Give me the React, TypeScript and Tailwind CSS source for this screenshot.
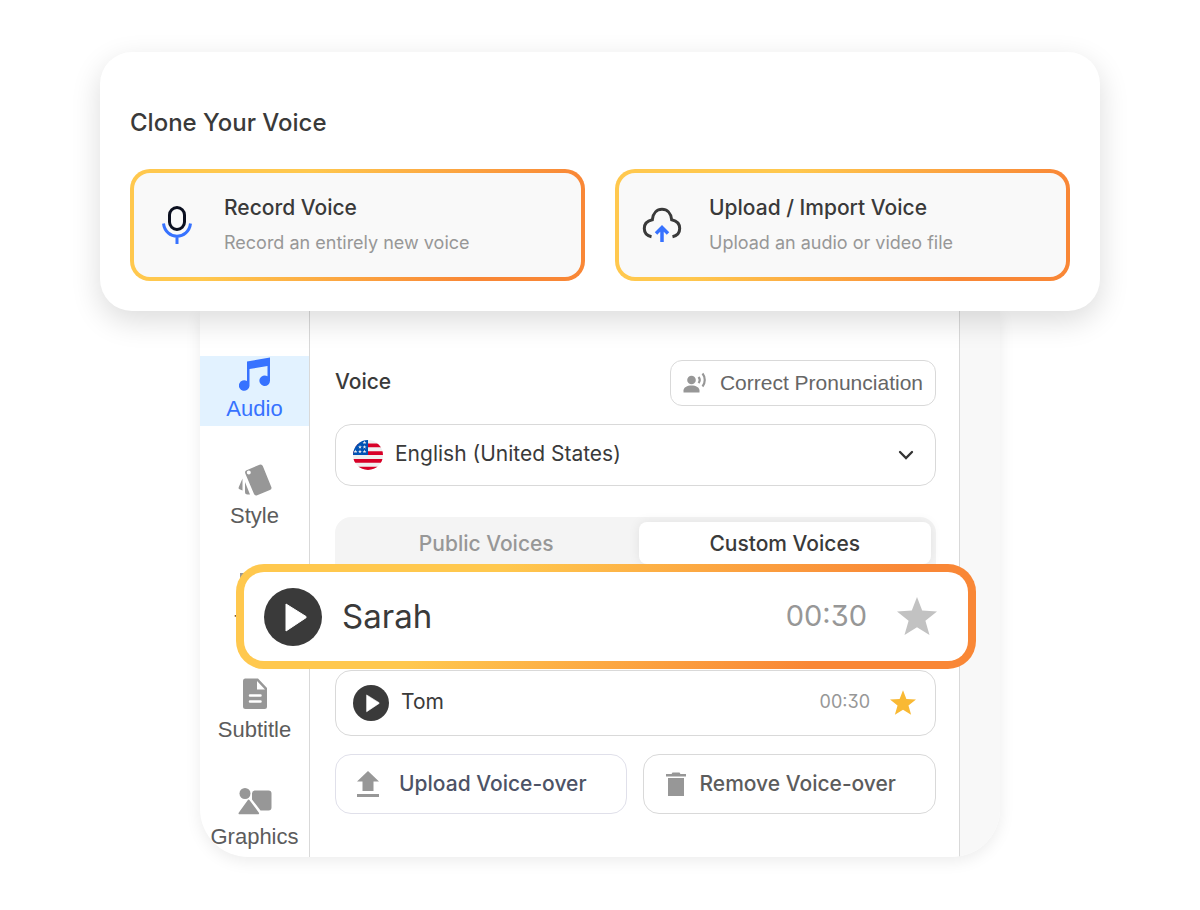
import type { ReactNode } from "react";

const MicIcon = () => (
  <svg width="32" height="40" viewBox="0 0 32 40" fill="none" strokeWidth="3">
    <rect x="8.500" y="2.5" width="15" height="22" rx="7.5" stroke="#0b1020" />
    <path d="M2.500 18.500c1 8 7 12.700 13.500 12.700S28.500 26.500 29.500 18.500M16 31v8" stroke="#3772ff" />
  </svg>
);

const CloudUploadIcon = () => (
  <svg width="40" height="36" viewBox="0 0 40 36" fill="none" strokeWidth="3">
    <path
      d="M9.500 29.700C5 28.700 2.300 25.500 2.300 21.500c0-4.500 3-7.600 8-8.700C11 6 15 2.300 20 2.300s9 3.700 9.700 10.500c5 1.100 8 4.200 8 8.700 0 4-2.700 7.200-7.200 8.200"
      stroke="#3a3a3a"
    />
    <path d="M20 35V21M14 26.500l6-6 6 6" stroke="#3772ff" strokeWidth="3.500" />
  </svg>
);

const MusicIcon = () => (
  <svg width="32" height="34" viewBox="0 0 32 34" fill="currentColor">
    <path d="M8 4.500L31 .5v23a5.300 5.300 0 1 1-2.500-4.300V9L10.500 12v17a5.300 5.300 0 1 1-2.500-5z" />
  </svg>
);

const StyleIcon = () => (
  <svg width="34" height="32" viewBox="0 0 34 32" fill="currentColor">
    <path d="M4.500 14.500v12l-3-1.200a1.500 1.500 0 0 1-.8-2zM7 18l5 12.500H9.500A2.500 2.500 0 0 1 7 28z" />
    <path
      fillRule="evenodd"
      d="M8.600 6.200L21.500.7a2.500 2.500 0 0 1 3.300 1.400l8.500 20.800a2.500 2.500 0 0 1-1.400 3.200l-12.700 5.100a2.500 2.500 0 0 1-3.300-1.400L7.300 9.400a2.500 2.500 0 0 1 1.300-3.200zM10.800 10.600a2 2 0 1 0 0-4 2 2 0 0 0 0 4z"
    />
  </svg>
);

const TextIcon = () => (
  <svg width="32" height="32" viewBox="0 0 32 32" fill="currentColor">
    <path d="M1 2h30v7h-4V6h-9v20h4v4H10v-4h4V6H5v3H1z" />
  </svg>
);

const SubtitleIcon = () => (
  <svg width="26" height="32" viewBox="0 0 26 32">
    <path
      d="M3 .5h13L25 10v18.500a2.500 2.500 0 0 1-2.500 2.500h-19A2.500 2.500 0 0 1 1 28.500V3A2.500 2.500 0 0 1 3 .5z"
      fill="currentColor"
    />
    <path d="M15 3v8.500h8z" fill="#fff" />
    <path d="M8 17.500h10.500M8 23.500h10.500" stroke="#fff" strokeWidth="2.500" strokeLinecap="round" />
  </svg>
);

const GraphicsIcon = () => (
  <svg width="34" height="28" viewBox="0 0 34 28" fill="currentColor">
    <circle cx="7" cy="6.500" r="5.500" />
    <path d="M16.500 3.500h14a3 3 0 0 1 3 3v14a3 3 0 0 1-3 3h-8l-8.500-11v-6a3 3 0 0 1 2.500-3z" />
    <path d="M9.700 13.200a1.200 1.200 0 0 1 1.900 0l9.300 12.500a1 1 0 0 1-.8 1.600H1.500a1 1 0 0 1-.8-1.600z" />
  </svg>
);

const SpeakerIcon = () => (
  <svg width="24" height="22" viewBox="0 0 24 22" fill="#979797">
    <circle cx="8.500" cy="8" r="4.300" />
    <path d="M.5 20.500v-2C.5 15.500 4 13.500 8.500 13.500s8 2 8 5v2z" />
    <path d="M15.500 5c1.500 1.800 1.500 4.200 0 6M19.500 1.500c3 3.500 3 9.500 0 13" fill="none" stroke="#979797" strokeWidth="2.200" />
  </svg>
);

const FlagIcon = () => (
  <svg width="30" height="30" viewBox="0 0 30 30">
    <clipPath id="flag">
      <circle cx="15" cy="15" r="15" />
    </clipPath>
    <g clipPath="url(#flag)">
      <path d="M0 0h30v30H0z" fill="#f0f0f0" />
      <path d="M0 3.500h30v3.800H0zM0 11.200h30V15H0zM0 19h30v3.800H0zM0 26.700h30V30H0z" fill="#d80027" />
      <path d="M0 0h15v15H0z" fill="#0052b4" />
      <g fill="#f0f0f0">
        {[
          [11.5, 2.5], [7, 7], [11.5, 7], [2.5, 11.5], [7, 11.5], [11.5, 11.5],
        ].map(([x, y]) => (
          <path
            key={`${x}-${y}`}
            transform={`translate(${x} ${y})`}
            d="M0-2L.5-.6H2L.8.3l.4 1.400L0 .8l-1.200.9.400-1.400L-2-.6h1.500z"
          />
        ))}
      </g>
    </g>
  </svg>
);

const ChevronIcon = () => (
  <svg width="16" height="10" viewBox="0 0 16 10" fill="none" stroke="#333" strokeWidth="2.300" strokeLinecap="round">
    <path d="M2 2l6 6 6-6" />
  </svg>
);

const PlayIcon = ({ className }: { className: string }) => (
  <svg className={className} viewBox="0 0 58 58">
    <circle cx="29" cy="29" r="29" fill="#3a3a3a" />
    <path d="M22 16l20 12.500a.9.900 0 0 1 0 1.200L22 43z" fill="#fff" stroke="#fff" strokeLinejoin="round" />
  </svg>
);

const StarIcon = ({ className }: { className: string }) => (
  <svg className={className} viewBox="0 0 40 38" fill="currentColor">
    <path d="M20 0l5.200 13.500 14.800 1L28.400 23.800 32.500 38 20 30.200 7.500 38l4.100-14.200L0 14.500l14.800-1z" />
  </svg>
);

const UploadIcon = () => (
  <svg width="22" height="26" viewBox="0 0 22 26" fill="#979797">
    <path d="M11 0l11 10.500h-5.500V20h-11v-9.500H0zM0 23h22v3H0z" />
  </svg>
);

const TrashIcon = () => (
  <svg width="20" height="24" viewBox="0 0 20 24" fill="#979797">
    <path d="M0 2h5.500l1-1.500h7l1 1.500H20v2.500H0zM2 6h16v18H2z" />
  </svg>
);

const navItems = [
  { name: "Audio", icon: <MusicIcon />, active: true },
  { name: "Style", icon: <StyleIcon /> },
  { name: "Text", icon: <TextIcon /> },
  { name: "Subtitle", icon: <SubtitleIcon /> },
  { name: "Graphics", icon: <GraphicsIcon /> },
];

const CloneOption = ({ icon, title, text }: { icon: ReactNode; title: string; text: string }) => (
  <button className="flex-1 p-1 rounded-[20px] bg-[linear-gradient(135deg,#ffc84e_32%,#f98736_80%)] text-left">
    <span className="flex items-center h-[104px] px-5 rounded-2xl bg-[#f9f9f9]">
      <span className="flex items-center justify-center w-[46px] mr-6">{icon}</span>
      <span className="flex flex-col gap-[5px] pb-[2px]">
        <span className="text-[21px] leading-8 font-medium">{title}</span>
        <span className="text-lg leading-7 text-[#979797]">{text}</span>
      </span>
    </span>
  </button>
);

const App = () => {
  return (
    <div className="pt-[52px] pb-[53px] bg-white font-['Inter',sans-serif] text-[#3a3a3a]">
      {/* Clone card */}
      <section className="relative z-20 w-5/6 mx-auto px-[30px] pt-[55px] pb-[30px] rounded-[32px] bg-white shadow-[0_10px_30px_rgba(0,0,0,0.14)]">
        <h1 className="mb-[30px] text-2xl leading-8 font-medium">Clone Your Voice</h1>
        <div className="flex gap-[30px]">
          <CloneOption icon={<MicIcon />} title="Record Voice" text="Record an entirely new voice" />
          <CloneOption icon={<CloudUploadIcon />} title="Upload / Import Voice" text="Upload an audio or video file" />
        </div>
      </section>

      {/* Editor panel */}
      <section className="flex w-2/3 mx-auto rounded-b-[48px] bg-white overflow-hidden shadow-[0_4px_16px_rgba(0,0,0,0.08)]">
        <nav className="flex flex-col gap-[37px] w-[110px] shrink-0 pt-[45px] border-r border-[#d9d9d9]">
          {navItems.map((item) => (
            <button
              key={item.name}
              className={`flex flex-col items-center gap-1 h-[70px] font-['Liberation_Sans',sans-serif] text-[22px] leading-7 ${
                item.active ? "bg-[#e2f2ff] text-[#3772ff]" : "text-[#979797]"
              }`}
            >
              <span className={`flex items-center justify-center h-[35px] ${item.active ? "" : "pb-[2px]"}`}>
                {item.icon}
              </span>
              <span className={item.active ? "" : "text-[#5c5c5c]"}>{item.name}</span>
            </button>
          ))}
        </nav>

        <main className="flex-1 min-w-0 pl-[25px] pr-[23px] pt-[49px] pb-[43px]">
          <div className="flex items-center justify-between">
            <h2 className="pb-[2px] text-[21px] leading-8 font-medium">Voice</h2>
            <button className="flex items-center gap-[13px] h-[46px] px-3 rounded-xl border border-[#d9d9d9] font-['Liberation_Sans',sans-serif] text-[21px] text-[#666]">
              <SpeakerIcon />
              Correct Pronunciation
            </button>
          </div>

          <label className="flex items-center gap-3 h-[62px] mt-[18px] px-[17px] rounded-2xl border border-[#d9d9d9]">
            <FlagIcon />
            <select aria-label="Language" className="flex-1 appearance-none bg-transparent pb-[2px] text-[21px] leading-8 outline-none">
              <option>English (United States)</option>
            </select>
            <span className="px-1">
              <ChevronIcon />
            </span>
          </label>

          <div className="flex gap-[6px] h-[52px] mt-[31px] p-[5px] rounded-t-2xl bg-[#f4f4f4] text-[21px] font-medium">
            <button className="flex-1 pt-[2px] text-[#979797]">Public Voices</button>
            <button className="flex-1 pt-[2px] rounded-lg bg-white shadow-[0_0_12px_rgba(0,0,0,0.08)]">
              Custom Voices
            </button>
          </div>

          {/* Highlighted voice, wider than the list */}
          <div className="relative z-10 -mt-[5px] -ml-[99px] -mr-[40px] p-2 rounded-[28px] bg-[linear-gradient(135deg,#ffc84e_32%,#f98736_80%)]">
            <div className="flex items-center h-[89px] px-5 rounded-[20px] bg-white">
              <button aria-label="Play Sarah">
                <PlayIcon className="w-[58px] h-[58px]" />
              </button>
              <span className="ml-5 pb-[2px] text-[33px] leading-10">Sarah</span>
              <span className="ml-auto mr-[30px] pb-[2px] text-[29px] leading-10 text-[#979797] [font-feature-settings:'cv09']">
                00:30
              </span>
              <button aria-label="Favorite Sarah" className="mr-[11px] pb-[2px] text-[#c2c2c2]">
                <StarIcon className="w-10 h-[38px]" />
              </button>
            </div>
          </div>

          <div className="flex items-center h-[66px] mt-px px-[17px] rounded-2xl border border-[#d9d9d9]">
            <button aria-label="Play Tom">
              <PlayIcon className="w-9 h-9" />
            </button>
            <span className="ml-3 pb-[2px] text-[21px] leading-8">Tom</span>
            <span className="ml-auto mr-5 pb-[2px] text-lg leading-8 text-[#979797] [font-feature-settings:'cv09']">
              00:30
            </span>
            <button aria-label="Unfavorite Tom" className="mr-[2px] pb-[2px] text-[#f9b934]">
              <StarIcon className="w-[26px] h-[25px]" />
            </button>
          </div>

          <div className="flex gap-4 mt-[18px] text-[21px] font-medium">
            <button className="flex flex-1 items-center gap-5 h-[60px] px-[21px] rounded-2xl border border-[#e0e0ea] text-[#4d5366]">
              <UploadIcon />
              Upload Voice-over
            </button>
            <button className="flex flex-1 items-center gap-[14px] h-[60px] px-[22px] rounded-2xl border border-[#d9d9d9] text-[#5c5c5c]">
              <TrashIcon />
              Remove Voice-over
            </button>
          </div>
        </main>

        <aside className="w-[41px] shrink-0 border-l border-[#d9d9d9] bg-[#f8f8f8]" />
      </section>
    </div>
  );
};

export default App;
